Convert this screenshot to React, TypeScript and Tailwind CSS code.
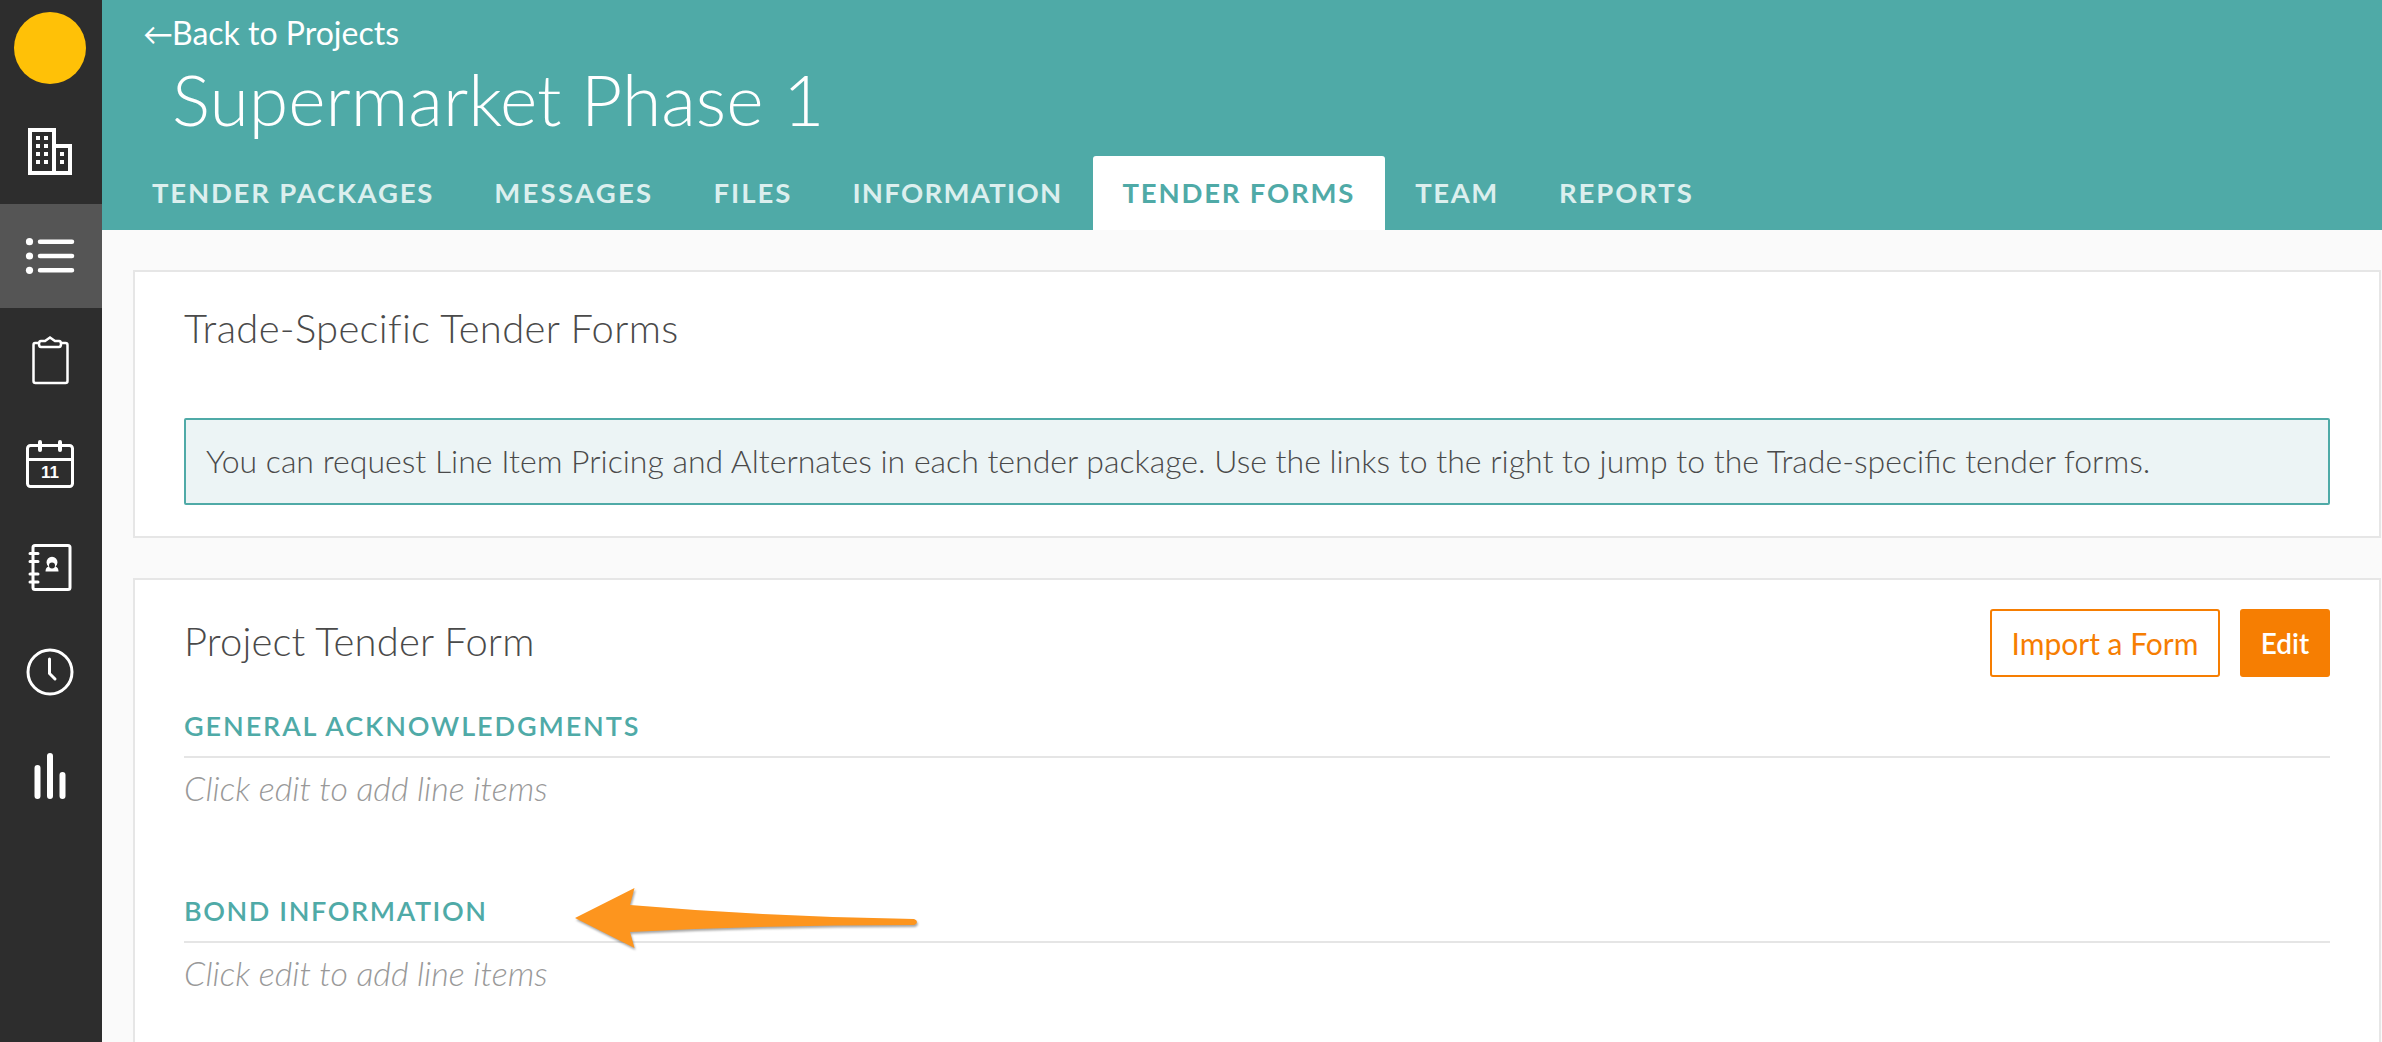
const tabs = [
  { label: "TENDER PACKAGES", tracking: "tracking-[1.8px]" },
  { label: "MESSAGES", tracking: "tracking-[2.3px]" },
  { label: "FILES", tracking: "tracking-[2px]" },
  { label: "INFORMATION", tracking: "tracking-[1.3px]" },
  { label: "TENDER FORMS", tracking: "tracking-[1.8px]" },
  { label: "TEAM", tracking: "tracking-[1.6px]" },
  { label: "REPORTS", tracking: "tracking-[1.9px]" },
];

function NavIcon({ top, children }: { top: number; children: React.ReactNode }) {
  return (
    <svg width="102" height="104" viewBox={`0 ${top} 102 104`} fill="none" stroke="#fff" strokeWidth="3" className="block">
      {children}
    </svg>
  );
}

function Sidebar() {
  return (
    <aside className="w-[102px] shrink-0 bg-[#2d2d2d]">
      <div className="h-[100px] pt-3 pl-[14px]">
        <div className="h-[72px] w-[72px] rounded-full bg-[#ffc107]" />
      </div>
      <NavIcon top={100}>
        <path d="M30 173V130H54V173ZM54 146H70V173H54" strokeWidth="4" />
        <g fill="#fff" stroke="none">
          <rect x="36" y="136" width="4" height="4" />
          <rect x="44" y="136" width="4" height="4" />
          <rect x="36" y="144" width="4" height="4" />
          <rect x="44" y="144" width="4" height="4" />
          <rect x="36" y="152" width="4" height="4" />
          <rect x="44" y="152" width="4" height="4" />
          <rect x="36" y="160" width="4" height="4" />
          <rect x="44" y="160" width="4" height="4" />
          <rect x="60" y="152" width="4" height="4" />
          <rect x="60" y="160" width="4" height="4" />
        </g>
      </NavIcon>
      <div className="bg-[#555555]">
        <NavIcon top={204}>
          <g fill="#fff" stroke="none">
            <circle cx="29.5" cy="241.7" r="3.6" />
            <circle cx="29.5" cy="256" r="3.6" />
            <circle cx="29.5" cy="270.3" r="3.6" />
          </g>
          <path d="M40 241.7H72M40 256H72M40 270.3H72" strokeWidth="4.5" strokeLinecap="round" />
        </NavIcon>
      </div>
      <NavIcon top={308}>
        <path d="M39 343H35Q33.5 343 33.5 345V381Q33.5 383 35.5 383H65.500Q67.500 383 67.500 381V345Q67.500 343 65.500 343H61" strokeWidth="2.500" />
        <path d="M41 341H45L50 337.500L55 341H59Q61 341 61 344Q61 347 59 347H41Q39 347 39 344Q39 341 41 341Z" strokeWidth="2.500" />
      </NavIcon>
      <NavIcon top={412}>
        <rect x="27.500" y="445.500" width="45" height="41" rx="3" />
        <path d="M28 459.500H72" />
        <path d="M40 442V450M60 442V450" strokeLinecap="round" strokeWidth="4" />
        <text x="50" y="478" textAnchor="middle" fill="#fff" stroke="none" fontSize="17" fontWeight="700" fontFamily="'Liberation Sans', sans-serif">11</text>
      </NavIcon>
      <NavIcon top={516}>
        <rect x="33" y="545.500" width="37" height="44" rx="2" />
        <path d="M30 553.500H38M30 561.500H38M30 574H38M30 582H38" strokeLinecap="round" />
        <path d="M45.500 571.500Q45.500 567.500 48.500 566.500A5.500 5.500 0 1 1 55.500 566.500Q58.500 567.500 58.500 571.500Z" fill="#fff" stroke="none" />
        <circle cx="52" cy="565.500" r="3" fill="#2d2d2d" stroke="none" />
      </NavIcon>
      <NavIcon top={620}>
        <circle cx="50" cy="672" r="22" />
        <path d="M49.500 659V673.500L55 679" strokeLinecap="round" />
      </NavIcon>
      <NavIcon top={724}>
        <path d="M37.500 768V796M50 756V796M62.500 775V796" strokeWidth="6" strokeLinecap="round" />
      </NavIcon>
    </aside>
  );
}

function Section({ title, tracking }: { title: string; tracking: string }) {
  return (
    <div className="mb-[90px]">
      <h3 className={`border-b-2 border-[#e5e5e5] pb-[15px] text-[27px] leading-[30px] font-semibold text-[#4faaa7] ${tracking}`}>{title}</h3>
      <p className="mt-[12px] text-[34px] leading-[36px] font-light text-[#999999] italic">Click edit to add line items</p>
    </div>
  );
}

export default function App() {
  return (
    <div className="relative flex h-screen overflow-hidden font-['Lato',sans-serif] text-[#4a4a4a]">
      <Sidebar />

      <main className="min-w-0 flex-1 bg-[#fafafa]">
        <header className="h-[230px] bg-[#4faaa7] text-white">
          <a href="#" className="flex h-[66px] items-center pl-[41px] text-[32px]">
            <span className="w-[29px] text-[30px]">←</span>
            Back to Projects
          </a>
          <h1 className="h-[60px] pl-[70px] text-[71.5px] leading-[64px] font-light">Supermarket Phase 1</h1>
          <nav className="mt-[30px] flex pl-[20px]">
            {tabs.map((tab) => (
              <a
                key={tab.label}
                href="#"
                className={
                  tab.label === "TENDER FORMS"
                    ? `flex h-[74px] items-center rounded-t-[3px] bg-white px-[30px] text-[27.5px] font-bold text-[#4faaa7] ${tab.tracking}`
                    : `flex h-[74px] items-center px-[30px] text-[27.5px] font-bold text-[#dcefee] ${tab.tracking}`
                }
              >
                {tab.label}
              </a>
            ))}
          </nav>
        </header>

        <div className="pt-10 pr-[1px] pl-[31px]">
          <section className="h-[268px] border-2 border-[#e6e6e6] bg-white px-[49px] pt-[33px]">
            <h2 className="text-[40px] leading-[46px] font-light tracking-[0.3px]">Trade-Specific Tender Forms</h2>
            <div className="mt-[67px] flex h-[87px] items-center rounded-[2px] border-2 border-[#4faaa7] bg-[#ecf4f5] px-5 pb-[2px] text-[32px] font-light">
              You can request Line Item Pricing and Alternates in each tender package. Use the links to the right to jump to the Trade-specific tender forms.
            </div>
          </section>

          <section className="mt-10 border-2 border-[#e6e6e6] bg-white px-[49px] pt-[29px]">
            <div className="flex items-start justify-between">
              <h2 className="pt-[2px] text-[40px] leading-[60px] font-light tracking-[0.15px]">Project Tender Form</h2>
              <div className="flex gap-5">
                <button className="h-[68px] w-[230px] rounded-[3px] border-2 border-[#f67e02] bg-white text-[30px] text-[#f67e02]">Import a Form</button>
                <button className="h-[68px] w-[90px] rounded-[3px] bg-[#f67e02] text-[28px] font-semibold text-white">Edit</button>
              </div>
            </div>
            <div className="mt-[34px]">
              <Section title="GENERAL ACKNOWLEDGMENTS" tracking="tracking-[1.9px]" />
              <Section title="BOND INFORMATION" tracking="tracking-[1.6px]" />
            </div>
          </section>
        </div>
      </main>

      <svg
        width="355"
        height="75"
        viewBox="570 880 355 75"
        className="absolute top-[880px] left-[570px] drop-shadow-[1px_2px_1px_rgba(0,0,0,0.35)]"
      >
        <path
          d="M575 918L634.500 888L630 905Q770 917 914 919Q917 920 917 922Q917 924 914 925Q770 925 630 932L634.500 948Z"
          fill="#fd951e"
        />
      </svg>
    </div>
  );
}
